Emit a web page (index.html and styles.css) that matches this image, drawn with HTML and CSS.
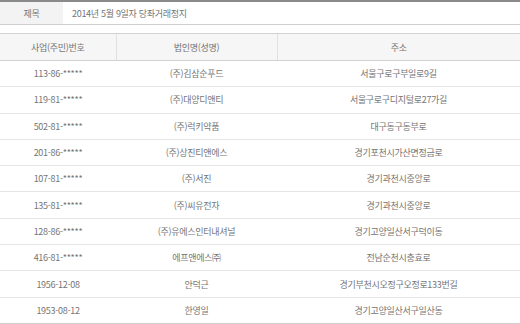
FILE: index.html
```html
<!DOCTYPE html>
<html lang="ko">
<head>
<meta charset="utf-8">
<link rel="stylesheet" href="styles.css">
</head>
<body>
<div class="page">
  <div class="title-row">
    <div class="title-label">제목</div>
    <div class="title-value">2014년 5월 9일자 당좌거래정지</div>
  </div>
  <table class="list">
    <colgroup>
      <col class="c1"><col class="c2"><col class="c3">
    </colgroup>
    <thead>
      <tr><th>사업(주민)번호</th><th>법인명(성명)</th><th>주소</th></tr>
    </thead>
    <tbody>
      <tr><td>113-86-*****</td><td>(주)김삼순푸드</td><td>서울구로구부일로9길</td></tr>
      <tr><td>119-81-*****</td><td>(주)대양디앤티</td><td>서울구로구디지털로27가길</td></tr>
      <tr><td>502-81-*****</td><td>(주)럭키약품</td><td>대구동구동부로</td></tr>
      <tr><td>201-86-*****</td><td>(주)상진티앤에스</td><td>경기포천시가산면정금로</td></tr>
      <tr><td>107-81-*****</td><td>(주)서진</td><td>경기과천시중앙로</td></tr>
      <tr><td>135-81-*****</td><td>(주)씨유전자</td><td>경기과천시중앙로</td></tr>
      <tr><td>128-86-*****</td><td>(주)유에스인터내셔널</td><td>경기고양일산서구덕이동</td></tr>
      <tr><td>416-81-*****</td><td>에프앤에스㈜</td><td>전남순천시충효로</td></tr>
      <tr><td>1956-12-08</td><td>안덕근</td><td>경기부천시오정구오정로133번길</td></tr>
      <tr><td>1953-08-12</td><td>한영일</td><td>경기고양일산서구일산동</td></tr>
    </tbody>
  </table>
</div>
</body>
</html>
```

FILE: styles.css
```css
html, body {
  margin: 0;
  padding: 0;
  background: #fff;
}
.page {
  width: 520px;
  font-family: "Noto Sans CJK KR", "Noto Sans", sans-serif;
  font-size: 9px;
  letter-spacing: -0.3px;
  color: #757575;
}
.title-row {
  display: flex;
  border-top: 2px solid #8a8a8a;
  border-bottom: 1px solid #cfcfcf;
  height: 22px;
  align-items: stretch;
}
.title-label {
  width: 63px;
  background: #f3f3f3;
  display: flex;
  align-items: center;
  justify-content: center;
}
.title-value {
  padding-left: 9px;
  display: flex;
  align-items: center;
}
.list {
  margin-top: 8px;
  width: 520px;
  border-collapse: collapse;
  table-layout: fixed;
}
.c1 { width: 116px; }
.c2 { width: 161px; }
.c3 { width: 243px; }
.list th {
  font-weight: normal;
  background: #f6f6f6;
  border-top: 1px solid #d2d2d2;
  border-bottom: 1px solid #d2d2d2;
  border-left: 1px solid #e0e0e0;
  height: 26px;
  padding: 0;
  text-align: center;
}
.list th:first-child { border-left: none; }
.list td {
  height: 25.3px;
  padding: 0;
  text-align: center;
  border-bottom: 1px solid #e6e6e6;
}
.list tbody tr:last-child td {
  border-bottom: 1px solid #cfcfcf;
}
```
